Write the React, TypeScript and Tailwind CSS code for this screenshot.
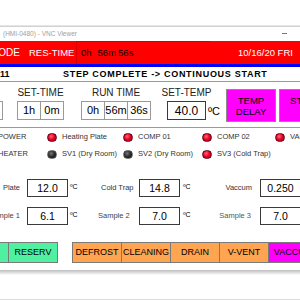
const led = {
  on: 'bg-[radial-gradient(circle_at_40%_35%,#ff6a7a_0%,#f0002a_45%,#a00018_100%)] border border-[#5a0010]',
  off: 'bg-[radial-gradient(circle_at_40%_35%,#777_0%,#2a2a2a_50%,#111_100%)] border border-[#555]',
}

function Lamp({ on, label, width }: { on: boolean; label: string; width: string }) {
  return (
    <div className={`flex shrink-0 items-center ${width}`}>
      <div className={`h-[9px] w-[10px] shrink-0 rounded-full ${on ? led.on : led.off}`} />
      <span className="ml-[5px] whitespace-nowrap text-[7.5px] leading-none text-[#333]">{label}</span>
    </div>
  )
}

function TimeBox({ value, first }: { value: string; first?: boolean }) {
  return (
    <div
      className={`flex h-[19px] w-[24px] shrink-0 items-center justify-center border border-[#9a9a9a] bg-white text-[11px] leading-none ${first ? '' : '-ml-px'}`}
    >
      {value}
    </div>
  )
}

function ValueBox({ value, className = '' }: { value: string; className?: string }) {
  return (
    <div
      className={`flex h-[18px] w-[41px] shrink-0 items-center justify-center border border-[#3a3a3a] bg-white text-[10.5px] leading-none text-black ${className}`}
    >
      {value}
    </div>
  )
}

function ActionButton({ label, color, className = '' }: { label: string; color: string; className?: string }) {
  return (
    <div
      className={`flex h-[21px] w-[50px] shrink-0 items-center justify-center border border-[#7a7a7a] text-[9px] leading-none text-black ${color} ${className}`}
    >
      {label}
    </div>
  )
}

export default function App() {
  return (
    <div className="flex h-[300px] w-[300px] flex-col overflow-hidden bg-white font-['Liberation_Sans',Arial,sans-serif] text-black">
      {/* desktop strip above the window */}
      <div className="h-[25px] shrink-0 bg-white" />
      <div className="h-[2px] shrink-0 bg-gradient-to-b from-[#f0f0f0] to-[#c8c8c8]" />

      {/* title bar */}
      <div className="relative flex h-[14px] shrink-0 items-center bg-white pl-[3px]">
        <span className="whitespace-nowrap text-[6.5px] leading-none text-[#a0a0a0]">(HMI-0480) - VNC Viewer</span>
        <div className="absolute left-[282px] top-[6px] h-px w-[5px] bg-[#777]" />
      </div>

      {/* red header */}
      <div className="flex h-[23px] shrink-0 items-stretch overflow-hidden bg-[#ff0000]">
        <div className="flex w-[76px] shrink-0 items-center">
          <span className="ml-[-10px] whitespace-nowrap text-[10px] leading-none text-white">MODE</span>
          <span className="ml-[9px] whitespace-nowrap text-[9.5px] leading-none text-white">RES-TIME</span>
        </div>
        <div className="flex w-[134px] shrink-0 items-center border-l border-t border-[#d40000] pl-[4px] text-[9.5px] leading-none text-black">
          <span>0h</span>
          <span className="ml-[6px]">56m</span>
          <span className="ml-[2px]">56s</span>
        </div>
        <div className="flex flex-1 items-center pl-[28px] text-[9.5px] leading-none text-white">
          <span className="whitespace-nowrap">10/16/20 FRI</span>
          <span className="ml-[7px] whitespace-nowrap">12:00</span>
        </div>
      </div>
      <div className="h-[3px] shrink-0 bg-[#0000ff]" />

      {/* step line */}
      <div className="flex h-[15px] shrink-0 items-center border-b border-[#9a9a9a] bg-white">
        <span className="w-[63px] shrink-0 text-[9px] font-bold leading-none">11</span>
        <span className="whitespace-nowrap text-[9px] font-bold leading-none tracking-[0.7px]">
          STEP COMPLETE -&gt; CONTINUOUS START
        </span>
      </div>

      {/* times */}
      <div className="flex h-[46px] shrink-0 items-start border-b border-[#9a9a9a]">
        <div className="ml-[-20px] mt-[19px] h-[19px] w-[23px] shrink-0 border border-[#9a9a9a] bg-white" />
        <div className="ml-[14px] flex w-[47px] shrink-0 flex-col items-center">
          <div className="mt-[4px] h-[14px] whitespace-nowrap text-[10px] leading-[14px] text-[#222]">SET-TIME</div>
          <div className="mt-[1px] flex">
            <TimeBox value="1h" first />
            <TimeBox value="0m" />
          </div>
        </div>
        <div className="ml-[17px] flex w-[70px] shrink-0 flex-col items-center">
          <div className="mt-[4px] h-[14px] whitespace-nowrap text-[10px] leading-[14px] text-[#222]">RUN TIME</div>
          <div className="mt-[1px] flex">
            <TimeBox value="0h" first />
            <TimeBox value="56m" />
            <TimeBox value="36s" />
          </div>
        </div>
        <div className="ml-[16px] flex w-[39px] shrink-0 flex-col items-center">
          <div className="mt-[4px] h-[14px] whitespace-nowrap text-[10px] leading-[14px] text-[#222]">SET-TEMP</div>
          <div className="mt-[1px] flex h-[19px] w-[39px] items-center justify-center border border-[#3a3a3a] bg-white text-[12px] leading-none">
            40.0
          </div>
        </div>
        <span className="ml-[2px] mt-[24px] w-[12px] shrink-0 text-[11px] leading-none">ºC</span>
        <div className="ml-[6px] mt-[7px] flex h-[33px] w-[50px] shrink-0 flex-col items-center justify-center border border-[#8a8a8a] bg-[#ff00ff] text-[9.5px] leading-[11px]">
          <span>TEMP</span>
          <span>DELAY</span>
        </div>
        <div className="ml-[3px] mt-[7px] flex h-[33px] w-[50px] shrink-0 flex-col items-center justify-center border border-[#8a8a8a] bg-[#ff00ff] text-[9.5px] leading-[11px]">
          <span className="ml-[-3px]">STEP</span>
          <span className="invisible">ON</span>
        </div>
      </div>

      {/* lamps */}
      <div className="flex shrink-0 flex-col gap-[5px] pt-[3px]">
        <div className="flex h-[12px] items-center">
          <span className="ml-[-2px] w-[49px] shrink-0 whitespace-nowrap text-[7.5px] leading-none text-[#333]">POWER</span>
          <Lamp on label="Heating Plate" width="w-[76px]" />
          <Lamp on label="COMP 01" width="w-[79px]" />
          <Lamp on label="COMP 02" width="w-[73px]" />
          <Lamp on label="VACUUM" width="w-[60px]" />
        </div>
        <div className="flex h-[12px] items-center">
          <span className="ml-[-2px] w-[49px] shrink-0 whitespace-nowrap text-[7.5px] leading-none text-[#333]">HEATER</span>
          <Lamp on={false} label="SV1 (Dry Room)" width="w-[76px]" />
          <Lamp on={false} label="SV2 (Dry Room)" width="w-[79px]" />
          <Lamp on label="SV3 (Cold Trap)" width="w-[73px]" />
        </div>
      </div>

      {/* values */}
      <div className="mt-[19px] flex h-[18px] shrink-0 items-center">
        <div className="flex w-[20px] shrink-0 justify-end whitespace-nowrap text-[7.5px] leading-none text-[#333]">Plate</div>
        <ValueBox value="12.0" className="ml-[7px]" />
        <span className="ml-[2px] w-[10px] shrink-0 self-start pt-[4px] text-[7px] leading-none">ºC</span>
        <span className="ml-[21px] w-[38px] shrink-0 whitespace-nowrap text-[7.5px] leading-none text-[#333]">Cold Trap</span>
        <ValueBox value="14.8" />
        <span className="ml-[3px] w-[10px] shrink-0 self-start pt-[4px] text-[7px] leading-none">ºC</span>
        <div className="flex w-[59px] shrink-0 justify-end whitespace-nowrap text-[7.5px] leading-none text-[#333]">Vaccum</div>
        <ValueBox value="0.250" className="ml-[8px]" />
      </div>
      <div className="mt-[10px] flex h-[18px] shrink-0 items-center">
        <div className="flex w-[20px] shrink-0 justify-end whitespace-nowrap text-[7.5px] leading-none text-[#444]">Sample 1</div>
        <ValueBox value="6.1" className="ml-[7px]" />
        <span className="ml-[2px] w-[10px] shrink-0 self-start pt-[4px] text-[7px] leading-none">ºC</span>
        <span className="ml-[18px] w-[41px] shrink-0 whitespace-nowrap text-[7.5px] leading-none text-[#444]">Sample 2</span>
        <ValueBox value="7.0" />
        <span className="ml-[3px] w-[10px] shrink-0 self-start pt-[4px] text-[7px] leading-none">ºC</span>
        <div className="flex w-[58px] shrink-0 justify-end whitespace-nowrap text-[7.5px] leading-none text-[#555]">Sample 3</div>
        <ValueBox value="7.0" className="ml-[9px]" />
      </div>

      {/* buttons */}
      <div className="mt-[17px] flex shrink-0">
        <ActionButton label="" color="bg-[#4ff0a0]" className="ml-[-41px]" />
        <ActionButton label="RESERV" color="bg-[#4ff0a0]" className="-ml-px" />
        <ActionButton label="DEFROST" color="bg-[#ffa552]" className="ml-[14px]" />
        <ActionButton label="CLEANING" color="bg-[#ffa552]" className="-ml-px" />
        <ActionButton label="DRAIN" color="bg-[#ffa552]" className="-ml-px" />
        <ActionButton label="V-VENT" color="bg-[#ffa552]" className="-ml-px" />
        <ActionButton label="VACCUM" color="bg-[#ff00ff]" className="-ml-px" />
      </div>

      {/* window bottom */}
      <div className="h-[7px] shrink-0 bg-white" />
      <div className="h-[5px] shrink-0 bg-gradient-to-b from-[#bdbdbd] to-white" />
      <div className="flex-1 bg-white" />
      <div className="h-px shrink-0 bg-[#dcdcdc]" />
    </div>
  )
}
